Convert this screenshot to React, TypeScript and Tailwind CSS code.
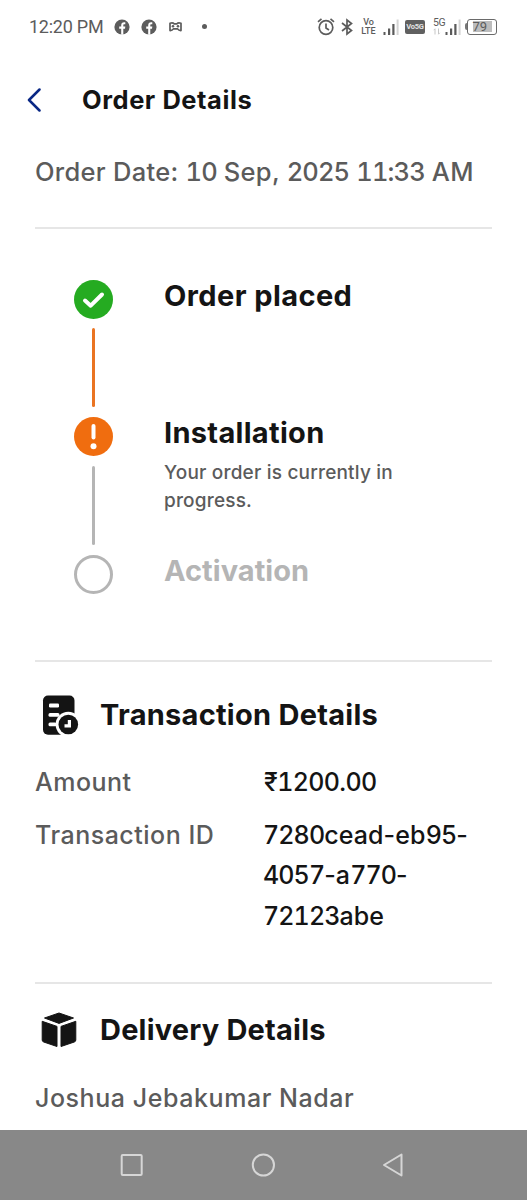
import type { ReactNode } from "react"

function FacebookIcon() {
  return (
    <svg width="16" height="16" viewBox="0 0 16 16">
      <circle cx="8" cy="8" r="7.6" fill="#5c5c5c" />
      <path d="M7.2 15.8V9.8H5.2V7.6h2V6.2c0-2 1.1-3 2.9-3h1.2v2.1h-1c-.7 0-1 .4-1 1v1.3h2l-.3 2.2H9.3v6z" fill="#fff" />
    </svg>
  )
}

function SignalIcon() {
  return (
    <svg width="16" height="16" viewBox="0 0 16 16">
      <path d="M.5 13h2v3h-2zM5 9.500h2.200V16H5zM9.300 5h2.200v11H9.300z" fill="#5a5a5a" />
      <path d="M13.600 .5h2V16h-2z" fill="#d4d4d4" />
    </svg>
  )
}

function StatusBar() {
  return (
    <div className="flex h-[53px] items-center pl-[29px] font-[Roboto,sans-serif] text-[#5c5c5c]">
      <span className="w-[85px] text-[18px] leading-5 tracking-[-0.25px] whitespace-nowrap">12:20 PM</span>
      <div className="flex items-center">
        <FacebookIcon />
        <div className="ml-[11px]">
          <FacebookIcon />
        </div>
        <svg width="13" height="10" viewBox="0 0 13 10" className="ml-[12px]">
          <path
            d="M1 1.300c1.700-.5 3.300-.4 4.200.5h2.600c.9-.9 2.500-1 4.200-.5v7.300c-1.700.1-2.600-.5-3.400-1.700H4.400C3.600 8.100 2.700 8.700 1 8.600z"
            fill="none"
            stroke="#5c5c5c"
            strokeWidth="1.700"
            strokeLinejoin="round"
          />
          <circle cx="4" cy="4.200" r="1.300" fill="#5c5c5c" />
          <circle cx="9" cy="4.200" r="1.300" fill="#5c5c5c" />
        </svg>
        <span className="ml-5 size-[5px] rounded-full bg-[#5c5c5c]" />
      </div>
      <div className="mr-[30px] ml-auto flex items-center">
        <svg width="18" height="18" viewBox="0 0 18 18" fill="none" stroke="#5c5c5c" strokeWidth="1.700">
          <circle cx="9" cy="9.500" r="6.800" />
          <path d="M9 5.500V10l3 2M1 3.800l3.500-2.900M17 3.800L13.500.9" />
        </svg>
        <svg width="12" height="18" viewBox="0 0 12 18" fill="none" stroke="#5c5c5c" strokeWidth="1.700" className="ml-[6px]">
          <path d="M1 5l9.500 7.500L6 16V2l4.500 3.500L1 13" />
        </svg>
        <div className="ml-[7px] flex w-[17px] flex-col items-center pt-px text-[9px] leading-none font-medium">
          <span className="h-[9px]">Vo</span>
          <span className="h-[9px]">LTE</span>
        </div>
        <div className="ml-[6px]">
          <SignalIcon />
        </div>
        <div className="ml-[6px] flex h-[14px] w-5 items-center justify-center rounded-[2px] bg-[#606060] text-[7.500px] leading-none font-bold tracking-[-0.2px] text-[#e4e4e4]">
          Vo5G
        </div>
        <div className="ml-[8px] h-[18px] w-[13px] text-[10.500px] leading-[9px] tracking-[-0.3px]">
          <div>5G</div>
          <svg width="8" height="7" viewBox="0 0 8 7" fill="none" stroke="#c6c6c6" className="mt-px">
            <path d="M2 6.500V.8L.7 2.200M5.500.5v5.700l1.300-1.400" />
          </svg>
        </div>
        <div className="-ml-px">
          <SignalIcon />
        </div>
        <div className="ml-[4px] flex items-center">
          <span className="h-[7px] w-[2px] rounded-l-sm bg-[#777]" />
          <div className="flex h-[16px] w-[30px] items-center justify-center rounded-[3px] border-[1.500px] border-[#6a6a6a]">
            <span className="flex h-[11px] w-[19px] items-center bg-[#bdbdbd] text-[13px] leading-none">
              <span>79</span>
            </span>
          </div>
        </div>
      </div>
    </div>
  )
}

function Divider() {
  return <div className="mx-[35px] h-[2px] shrink-0 bg-[#e6e6e6]" />
}

function Digits({ children }: { children: ReactNode }) {
  return <span className="tracking-[-0.9px] tabular-nums">{children}</span>
}

function Step({ icon, line, children }: { icon: ReactNode; line?: string; children: ReactNode }) {
  return (
    <div className="flex">
      <div className="flex w-[39px] flex-col items-center">
        {icon}
        {line && <div className={`mt-[9.500px] mb-[10px] h-[79px] w-[3px] rounded-full ${line}`} />}
      </div>
      <div className="ml-[51px]">{children}</div>
    </div>
  )
}

function TransactionIcon() {
  return (
    <svg width="37" height="40" viewBox="0 0 37 40">
      <rect x="1" y=".5" width="31.500" height="39.200" rx="5" fill="#141414" />
      <rect x="7" y="8.400" width="10" height="4" rx="1.200" fill="#fff" />
      <rect x="6.500" y="18" width="11" height="3.800" rx="1.500" fill="#fff" />
      <rect x="6.500" y="27.400" width="8" height="3.800" rx="1.500" fill="#fff" />
      <circle cx="26.300" cy="29.500" r="12.700" fill="#fff" />
      <circle cx="26.300" cy="29.500" r="9.800" fill="#141414" />
      <path d="M25.800 25h3.200v7.500h-6.500v-3.300h3.300z" fill="#fff" />
    </svg>
  )
}

function BoxIcon() {
  return (
    <svg width="36" height="36" viewBox="0 0 36 36" fill="#141414" stroke="#141414" strokeLinejoin="round">
      <path d="M18 1L32.500 6 18 11.400 3.500 6z" />
      <path d="M1.200 9.300L16 14.400v20.100L2.700 30q-1.500-.5-1.500-2zM34.800 9.300L20 14.400v20.100L33.300 30q1.500-.5 1.500-2z" />
    </svg>
  )
}

export default function App() {
  return (
    <div className="flex h-[1200px] w-[527px] flex-col overflow-hidden bg-white font-[Inter,sans-serif] text-[#141414]">
      <StatusBar />

      <header className="flex h-[94px] items-center pl-[27px]">
        <svg width="15" height="24" viewBox="0 0 15 24" fill="none" stroke="#0a2885" strokeWidth="2.500" strokeLinecap="round" strokeLinejoin="round">
          <path d="M12.500 1.500L2 12l10.500 10.500" />
        </svg>
        <h1 className="ml-[40px] text-[25.500px] leading-8 font-bold tracking-[0.55px] whitespace-nowrap">Order Details</h1>
      </header>

      <p className="h-20 pl-[35px] pt-[9px] text-[25.500px] leading-8 font-medium tracking-[0.28px] whitespace-nowrap text-[#5b5b5b]">
        Order Date: <Digits>10</Digits> Sep, <Digits>2025</Digits> <Digits>11:33</Digits> AM
      </p>

      <Divider />

      <section className="h-[431px] shrink-0 pl-[74px] pt-[50.500px]">
        <Step
          line="bg-[#ea7422]"
          icon={
            <svg width="39" height="39" viewBox="0 0 39 39" fill="none">
              <circle cx="19.500" cy="19.500" r="19.500" fill="#25ab21" />
              <path d="M11 20.500l5.700 5.200L28 14.500" stroke="#fff" strokeWidth="4" strokeLinecap="round" strokeLinejoin="round" />
            </svg>
          }
        >
          <h2 className="text-[29px] leading-8 font-bold tracking-[0.42px] whitespace-nowrap">Order placed</h2>
        </Step>
        <Step
          line="bg-[#b5b5b5]"
          icon={
            <svg width="39" height="39" viewBox="0 0 39 39" fill="none">
              <circle cx="19.500" cy="19.500" r="19.500" fill="#f06d0f" />
              <path d="M19.500 9v11.500" stroke="#fff" strokeWidth="4" strokeLinecap="round" />
              <circle cx="19.500" cy="29.300" r="3" fill="#fff" />
            </svg>
          }
        >
          <h2 className="text-[29px] leading-8 font-bold tracking-[0.3px] whitespace-nowrap">Installation</h2>
          <p className="mt-[10px] w-[250px] text-[19px] leading-[27.500px] font-medium tracking-[0.19px] text-[#5b5b5b]">
            Your order is currently in progress.
          </p>
        </Step>
        <Step icon={<div className="size-[39px] rounded-full border-[3px] border-[#b5b5b5]" />}>
          <h2 className="text-[29px] leading-8 font-bold tracking-[0.03px] whitespace-nowrap text-[#b5b5b5]">Activation</h2>
        </Step>
      </section>

      <Divider />

      <section className="h-[320px] shrink-0 pt-[33px]">
        <div className="flex items-center pl-[42px]">
          <TransactionIcon />
          <h2 className="ml-[21px] text-[29px] leading-8 font-bold tracking-[0.26px] whitespace-nowrap">Transaction Details</h2>
        </div>
        <dl className="mt-[27px] grid grid-cols-[229px_1fr] gap-y-3 pl-[35px] text-[25px] leading-[40.500px] font-medium tracking-[0.5px]">
          <dt className="text-[#5b5b5b]">Amount</dt>
          <dd className="tracking-[-0.65px] tabular-nums">₹1200.00</dd>
          <dt className="text-[#5b5b5b]">Transaction ID</dt>
          <dd className="-ml-px tracking-[0.1px]">
            <Digits>7280</Digits>cead-eb<Digits>95</Digits>-
            <br />
            <Digits>4057</Digits>-a<Digits>770</Digits>-
            <br />
            <Digits>72123</Digits>abe
          </dd>
        </dl>
      </section>

      <Divider />

      <section className="h-[146px] shrink-0 pt-[28px]">
        <div className="flex items-center pl-[41px]">
          <BoxIcon />
          <h2 className="ml-[23px] text-[29px] leading-8 font-bold tracking-[0.2px] whitespace-nowrap">Delivery Details</h2>
        </div>
        <p className="mt-[34px] pl-[35px] text-[25px] leading-8 font-medium tracking-[0.56px] whitespace-nowrap text-[#5b5b5b]">
          Joshua Jebakumar Nadar
        </p>
      </section>

      {/* Android navigation bar */}
      <nav className="flex flex-1 items-center bg-[#888] pl-[120px]">
        <svg width="23" height="24" viewBox="0 0 23 24" fill="none" stroke="#d6d6d6" strokeWidth="2">
          <rect x="1.700" y="2" width="20" height="20" rx="1" />
        </svg>
        <svg width="24" height="24" viewBox="0 0 24 24" fill="none" stroke="#d6d6d6" strokeWidth="2" className="ml-[108px]">
          <circle cx="12.400" cy="12" r="10.600" />
        </svg>
        <svg width="22" height="24" viewBox="0 0 22 24" fill="none" stroke="#d6d6d6" strokeWidth="2" strokeLinejoin="round" className="ml-[107px]">
          <path d="M19.500 1.500v21L2 12z" />
        </svg>
      </nav>
    </div>
  )
}
